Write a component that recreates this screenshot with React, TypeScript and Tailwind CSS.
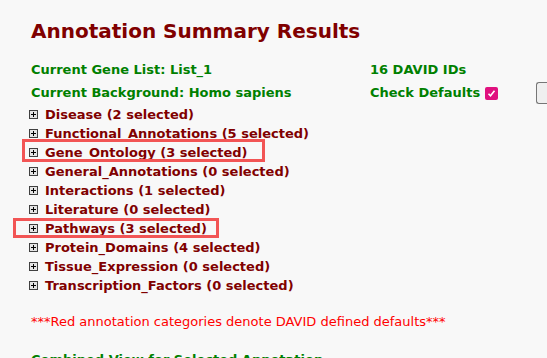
import React from 'react'

const CATEGORIES = [
  { name: 'Disease', count: 2 },
  { name: 'Functional_Annotations', count: 5 },
  { name: 'Gene_Ontology', count: 3, box: 'gene' },
  { name: 'General_Annotations', count: 0 },
  { name: 'Interactions', count: 1 },
  { name: 'Literature', count: 0 },
  { name: 'Pathways', count: 3, box: 'path' },
  { name: 'Protein_Domains', count: 4 },
  { name: 'Tissue_Expression', count: 0 },
  { name: 'Transcription_Factors', count: 0 },
]

function PlusBox() {
  return (
    <svg width="9" height="9" viewBox="0 0 9 9" className="shrink-0">
      <rect x="0.5" y="0.5" width="8" height="8" fill="#e4e4e4" stroke="#404040" />
      <path d="M2 4.5h5M4.5 2v5" stroke="#000" strokeWidth="1" />
    </svg>
  )
}

export default function App() {
  return (
    <div
      className="h-[358px] w-[547px] overflow-hidden bg-[#f8f8f8] pl-[31px] pt-[17px]"
      style={{ fontFamily: '"DejaVu Sans", Verdana, sans-serif' }}
    >
      <h1 className="whitespace-nowrap text-[20px] font-bold leading-[28px] text-[#800000]">Annotation Summary Results</h1>

      {/* gene list info */}
      <div className="mt-[17px] grid grid-cols-[339px_auto_1fr] items-center gap-y-[4px] whitespace-nowrap text-[13px] font-bold leading-[16px] text-[#008000]">
        <div>Current Gene List: List_1</div>
        <div>16 DAVID IDs</div>
        <div />
        <div>Current Background: Homo sapiens</div>
        <div className="flex items-center gap-[5px]">
          Check Defaults
          <span className="flex h-[13px] w-[13px] items-center justify-center rounded-[2px] bg-[#e0117f]">
            <svg width="9" height="9" viewBox="0 0 9 9">
              <path d="M1.5 4.8l2 2 4-5" fill="none" stroke="#fff" strokeWidth="1.6" />
            </svg>
          </span>
        </div>
        <div className="flex justify-end">
          <div className="h-[22px] w-[11px] rounded-l-[3px] border border-r-0 border-[#767676] bg-[#efefef]" />
        </div>
      </div>

      {/* categories */}
      <div className="mt-[1px] -ml-[2px] flex flex-col">
        {CATEGORIES.map(c => (
          <div key={c.name} className="relative flex h-[19px] items-center gap-[7px] whitespace-nowrap text-[13px] font-bold text-[#800000]">
            <PlusBox />
            <span className="leading-[19px]">
              {c.name} ({c.count} selected)
            </span>
            {c.box === 'gene' && (
              <div className="absolute -left-[7px] top-[-4px] h-[23px] w-[243px] border-[3px] border-[#f25555]" />
            )}
            {c.box === 'path' && (
              <div className="absolute -left-[16px] top-[-1px] h-[20px] w-[206px] border-[3px] border-[#f25555]" />
            )}
          </div>
        ))}
      </div>

      <p className="mt-[17px] whitespace-nowrap text-[13px] text-[#ff0000]">***Red annotation categories denote DAVID defined defaults***</p>

      <p className="mt-[18px] whitespace-nowrap text-[13px] font-bold text-[#008000]">Combined View for Selected Annotation</p>
    </div>
  )
}
